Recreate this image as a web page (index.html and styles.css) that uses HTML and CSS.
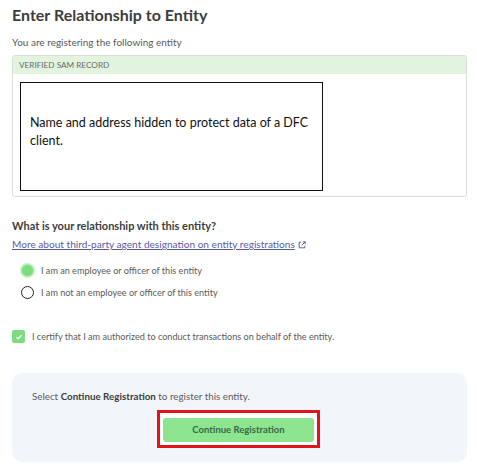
FILE: index.html
```html
<!DOCTYPE html>
<html lang="en">
  <head>
    <meta charset="UTF-8" />
    <title>Enter Relationship to Entity</title>
    <link rel="stylesheet" href="styles.css">
  </head>
  <body>
    <h1>Enter Relationship to Entity</h1>
    <p class="intro">You are registering the following entity</p>

    <div class="record">
      <div class="record-header">VERIFIED SAM RECORD</div>
      <div class="record-body">
        <div class="redacted">
          Name and address hidden to protect data of a DFC client.
        </div>
      </div>
    </div>

    <h2>What is your relationship with this entity?</h2>
    <a class="ext-link" href="#">More about third-party agent designation on entity registrations<svg class="ext-icon" viewBox="0 0 10 10" width="8" height="8"><path d="M4 1.5H1.5v7h7V6" fill="none" stroke="currentColor" stroke-width="1.2"/><path d="M6 1h3v3M9 1L4.5 5.5" fill="none" stroke="currentColor" stroke-width="1.2"/></svg></a>

    <div class="radios">
      <label class="radio-item">
        <span class="radio checked"></span>
        I am an employee or officer of this entity
      </label>
      <label class="radio-item">
        <span class="radio"></span>
        I am not an employee or officer of this entity
      </label>
    </div>

    <label class="certify">
      <span class="check">
        <svg viewBox="0 0 10 10" width="8" height="8"><path d="M1.8 5.2l2.1 2 4.3-4.5" fill="none" stroke="#fff" stroke-width="1.6"/></svg>
      </span>
      I certify that I am authorized to conduct transactions on behalf of the entity.
    </label>

    <div class="actions">
      <p>Select <strong>Continue Registration</strong> to register this entity.</p>
      <div class="highlight">
        <button class="primary-button">Continue Registration</button>
      </div>
    </div>
  </body>
</html>
```

FILE: styles.css
```css
:root {
  --text-dark: #3d3d3d;
  --text-mid: #5a5a5a;
  --border: #dcdcdc;
  --green-light: #e2f3de;
  --green: #7ddc7f;
  --green-button: #8de58f;
  --green-text: #356b48;
  --panel: #f2f6fb;
  --link: #5a5a9a;
}

body {
  margin: 0;
  padding: 4px 10px 10px 12px;
  font-family: "Lato", "Open Sans", sans-serif;
  color: var(--text-mid);
  background: #fff;
}

h1 {
  margin: 0;
  font-size: 16px;
  font-weight: 700;
  color: var(--text-dark);
  line-height: 22px;
}

.intro {
  margin: 9px 0 6px;
  font-size: 10px;
  line-height: 14px;
}

.record {
  border: 1px solid var(--border);
  border-radius: 3px;
  height: 142px;
  box-sizing: border-box;
}

.record-header {
  background: var(--green-light);
  font-size: 8.2px;
  line-height: 18px;
  height: 18px;
  padding-left: 6px;
  color: #6a6a6a;
}

.record-body {
  padding: 8px 0 0 7px;
}

.redacted {
  width: 303px;
  height: 109px;
  box-sizing: border-box;
  border: 1.5px solid #111;
  padding: 31px 8px 0 9px;
  font-family: "Lato", sans-serif;
  font-size: 12.5px;
  line-height: 18px;
  color: #111;
}

h2 {
  margin: 22px 0 0;
  font-size: 11px;
  font-weight: 700;
  color: var(--text-dark);
  line-height: 13px;
}

.ext-link {
  font-size: 10.1px;
  color: var(--link);
  text-decoration: underline;
  line-height: 14px;
}

.ext-icon {
  margin-left: 3px;
  vertical-align: -1px;
}

.radios {
  margin: 13px 0 0 9px;
  display: flex;
  flex-direction: column;
  gap: 9px;
}

.radio-item,
.certify {
  display: flex;
  align-items: center;
  gap: 7px;
  font-size: 9.1px;
  line-height: 13px;
}

.radio {
  width: 11px;
  height: 11px;
  border-radius: 50%;
  border: 1.5px solid #222;
  flex: none;
}

.radio.checked {
  border-color: #b4ecb6;
  background: var(--green);
  box-shadow: 0 0 0 1px #c8f0c9;
}

.certify {
  margin-top: 31px;
}

.check {
  width: 13px;
  height: 13px;
  border-radius: 2px;
  background: var(--green);
  display: flex;
  align-items: center;
  justify-content: center;
  flex: none;
}

.actions {
  margin-top: 30px;
  width: 455px;
  height: 89px;
  box-sizing: border-box;
  background: var(--panel);
  border-radius: 10px;
  padding: 17px 20px 0;
}

.actions p {
  margin: 0 0 7px;
  font-size: 9.8px;
  line-height: 13px;
}

.actions strong {
  color: var(--text-dark);
}

.highlight {
  width: 163px;
  height: 38px;
  box-sizing: border-box;
  margin-left: 125px;
  border: 3px solid #e0141c;
  padding: 4px 3px;
  background: #fff;
}

.primary-button {
  width: 100%;
  height: 100%;
  border: none;
  border-radius: 3px;
  background: var(--green-button);
  color: var(--green-text);
  font-family: "Lato", sans-serif;
  font-size: 9.5px;
  font-weight: 700;
}
```
